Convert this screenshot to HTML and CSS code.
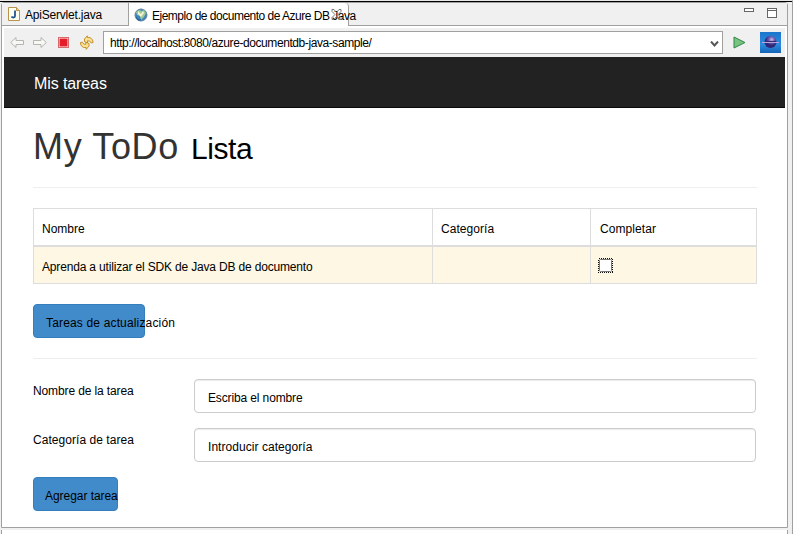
FILE: index.html
```
<!DOCTYPE html>
<html lang="es">
<head>
<meta charset="utf-8">
<title>Ejemplo de documento de Azure DB Java</title>
<link rel="stylesheet" href="styles.css">
</head>
<body>
<div class="workbench">
  <section class="editor">
    <div class="tabs">
      <div class="tab">
        <svg width="12" height="14" viewBox="0 0 12 14"><path d="M.5.5h8l3 3v10H.5z" fill="#fffdf0" stroke="#b89348"/><path d="M8.500.5v3h3" fill="#eed38a" stroke="#b89348"/><path d="M7 3.500v5.500q0 1.500-1.500 1.500T3.500 9.500" fill="none" stroke="#23568f" stroke-width="1.800"/></svg>
        <span class="t-api">ApiServlet.java</span>
      </div>
      <div class="tab active">
        <svg class="globe" width="14" height="14" viewBox="0 0 14 14"><circle cx="7" cy="7" r="6" fill="#3c86bd" stroke="#6582a0"/><path d="M2 4 5 2l3 1 2-1 2 3-2 4-3 3-1-4-3-1z" fill="#9fc796"/><path d="m4 3 3 3 2-3 1 2-3 4-3-3z" fill="#f4f4d4"/><path d="M2 9l2 3h3" stroke="#1e598c" fill="none"/></svg>
        <span class="t-doc">Ejemplo de documento de Azure DB Java</span>
        <svg class="close" width="11" height="11" viewBox="0 0 11 11"><path d="M1 .5h2l2.500 3 2.500-3h2v2l-3 3 3 3v2H8l-2.500-3-2.500 3H1v-2l3-3-3-3z" fill="none" stroke="#777"/></svg>
      </div>
      <div class="window">
        <svg width="34" height="12" viewBox="0 0 34 12" shape-rendering="crispEdges"><path d="M.5 1.500h9v3h-9z M23.500 1.500h9v9h-9z M24 3.500h8" fill="#fff" stroke="#666"/></svg>
      </div>
    </div>
    <div class="toolbar">
      <svg class="nav" width="84" height="16" viewBox="0 0 84 16">
        <path d="M.7 7.500 6 2.500v3h7.500v4H6v3z M36.300 7.500 31 2.500v3h-7.500v4H31v3z" fill="#f7f7f5" stroke="#b5b5af"/>
        <rect x="48.500" y="2.500" width="10" height="10" fill="#fff" stroke="#d96a6a"/><rect x="49.500" y="3.500" width="8" height="8" fill="#e51c2b"/>
        <g fill="#fbe293" stroke="#bd8722" stroke-width=".9" stroke-linejoin="round"><path d="M74.500 6.500 74.500 4l2.800-3.200v1.700q3-.8 5.200 2.200l.6 2.800-2 .5q-.8-2.600-3.600-2.300v2.400z"/><path d="M79 8.500v2.600l-2.800 3.200v-1.700q-3 .8-5.200-2.200l-.6-2.800 2-.5q.8 2.600 3.400 2.300V7.200z"/></g>
      </svg>
      <div class="address"><span class="t-url">http://localhost:8080/azure-documentdb-java-sample/</span>
        <svg width="9" height="8" viewBox="0 0 9 8"><path d="M1 .5 4.500 4.500 8 .5" fill="none" stroke="#555" stroke-width="2"/></svg>
      </div>
      <svg class="go" width="13" height="13" viewBox="0 0 13 13"><path d="m1 1 11 5.500L1 12z" fill="#78c37f" stroke="#2f8748"/></svg>
      <svg width="21" height="21" viewBox="0 0 21 21"><defs><linearGradient id="sky" y2="1" x2="0"><stop stop-color="#1c75cc"/><stop offset=".6" stop-color="#2c8bdf"/><stop offset="1" stop-color="#1463b6"/></linearGradient><radialGradient id="orb" cx=".6" cy=".3"><stop stop-color="#c9bce6"/><stop offset=".5" stop-color="#6c58ac"/><stop offset="1" stop-color="#2f2678"/></radialGradient></defs><path d="M0 0h21v21H0z" fill="url(#sky)"/><circle cx="10.500" cy="10" r="6" fill="url(#orb)"/><path d="M2 10.500h17" stroke="#b4a7dc"/><path d="M5 9.500h11" stroke="#342875"/></svg>
    </div>
    <div class="page">
      <nav class="navbar"><span class="t-brand">Mis tareas</span></nav>
      <main>
        <h1><span class="t-todo">My ToDo</span><small class="t-list">Lista</small></h1>
        <div class="grid">
          <div class="cell"><span class="t-name">Nombre</span></div>
          <div class="cell"><span class="t-cat">Categoría</span></div>
          <div class="cell last"><span class="t-comp">Completar</span></div>
          <div class="cell item"><span class="t-sdk">Aprenda a utilizar el SDK de Java DB de documento</span></div>
          <div class="cell item"></div>
          <div class="cell item check"><svg width="15" height="15" viewBox="0 0 15 15"><rect x="1.500" y="1.500" width="12" height="12" rx="1" fill="#fff" stroke="#777"/><rect x=".5" y=".5" width="14" height="14" fill="none" stroke="#111" stroke-dasharray="1 1" shape-rendering="crispEdges"/></svg></div>
        </div>
        <div class="button update"><span class="t-update">Tareas de actualización</span></div>
        <form class="form">
          <label><span class="t-tname">Nombre de la tarea</span></label><div class="input"><span class="t-pname">Escriba el nombre</span></div>
          <label><span class="t-tcat">Categoría de tarea</span></label><div class="input"><span class="t-pcat">Introducir categoría</span></div>
        </form>
        <div class="button add"><span class="t-add">Agregar tarea</span></div>
      </main>
    </div>
  </section>
  <div class="next"></div>
</div>
</body>
</html>
```
FILE: styles.css
```
* { box-sizing: border-box; }
body { margin: 0; background: #fff; color: #000; font: 12px/14px "Liberation Sans", Arial, sans-serif; overflow: hidden; }
svg { display: block; flex: none; }
span { white-space: nowrap; }
.workbench { width: 793px; height: 534px; background: #f0f0f0; border-top: 1px solid #e8e8e8; border-right: 1px solid #a0a0a0; }
.workbench::before { content: ""; display: block; height: 1px; background: #000; }
.editor { width: 787px; height: 526px; margin-left: 1px; border: 1px solid #a0a0a0; border-radius: 3px 3px 0 0; background: #fff; }
.tabs { display: flex; height: 23px; background: #f0f0f0; }
.tab { display: flex; width: 126px; height: 23px; padding: 4px 0 0 6px; border-bottom: 1px solid #a0a0a0; }
.tab span { margin: 1px 0 0 5px; }
.tab.active { position: relative; width: 221px; padding: 4px 0 0 5px; background: #fff; border: solid #a0a0a0; border-width: 0 1px 0 1px; border-radius: 0 4px 0 0; }
.tab.active span { margin: 2px 0 0 4px; }
.globe { margin-top: 1px; }
.close { position: absolute; left: 202px; top: 6px; }
.window { display: flex; flex: 1; justify-content: flex-end; padding: 4px 9px 0 0; border-bottom: 1px solid #a0a0a0; }
.toolbar { display: flex; width: 781px; height: 29px; margin: 2px 0 0 2px; padding: 4px 4px 0 6px; background: #f0f0f0; }
.nav { margin-top: 3px; }
.address { display: flex; justify-content: space-between; width: 620px; height: 23px; margin: -1px 0 0 9px; flex: none; padding: 4px 3px 0 6px; border: 1px solid #a0a0a0; background: #fff; }
.address svg { margin-top: 5px; }
.go { margin: 4px 14px 0 10px; }
.page { width: 781px; margin-left: 2px; }
.navbar { height: 51px; padding: 18px 30px; background: #222; border-bottom: 1px solid #080808; color: #fff; font-size: 16px; line-height: 18px; }
main { padding: 0 28px 0 29px; }
h1 { height: 80px; margin: 0 0 20px; padding-top: 18px; border-bottom: 1px solid #eee; color: #333; font-size: 36px; font-weight: normal; line-height: 42px; }
h1 small { margin-left: 12px; color: #000; font-size: 30px; }
.grid { display: grid; grid-template-columns: 399px 158px 166px; grid-template-rows: 38px 38px; width: 724px; border-left: 1px solid #ddd; border-top: 1px solid #ddd; margin-bottom: 20px; height: 76px; }
.cell { padding: 13px 8px 0; border: solid #ddd; border-width: 0 1px 2px 0; }
.last { padding-left: 9px; }
.item { padding-top: 13px; border-bottom-width: 1px; background: #fdf7e3; height: 37px; }
.check { padding: 11px 7px; }
.button { height: 34px; padding: 12px 0 0 11px; background: #428bca; border: 1px solid #357ebd; border-radius: 4px; }
.update { width: 112px; padding: 11px 0 0 12px; }
.form { display: grid; grid-template-columns: 161px 562px; row-gap: 15px; margin: 20px 0 15px; padding-top: 20px; border-top: 1px solid #eee; }
label { padding-top: 5px; }
.input { height: 34px; padding: 11px 13px; border: 1px solid #ccc; border-radius: 4px; box-shadow: inset 0 1px 1px rgba(0,0,0,.08); }
.add { width: 85px; padding-top: 11px; }
.next { height: 4px; width: 787px; margin: 2px 0 0 1px; background: #fff; border: solid #a0a0a0; border-width: 0 1px; }
.t-api { letter-spacing: -.2px; }
.t-doc { letter-spacing: -.5px; }
.t-url { letter-spacing: -.42px; }
.t-brand { letter-spacing: -.1px; }
.t-todo { letter-spacing: .65px; }
.t-list { letter-spacing: -.4px; }
.t-sdk { letter-spacing: -.17px; }
.t-cat, .t-pcat, .t-tcat { letter-spacing: .05px; }
.t-comp { letter-spacing: .08px; }
.t-update { letter-spacing: .16px; }
.t-tname { letter-spacing: -.12px; }
.t-pname { letter-spacing: -.13px; }
.t-add { letter-spacing: -.05px; }
```
